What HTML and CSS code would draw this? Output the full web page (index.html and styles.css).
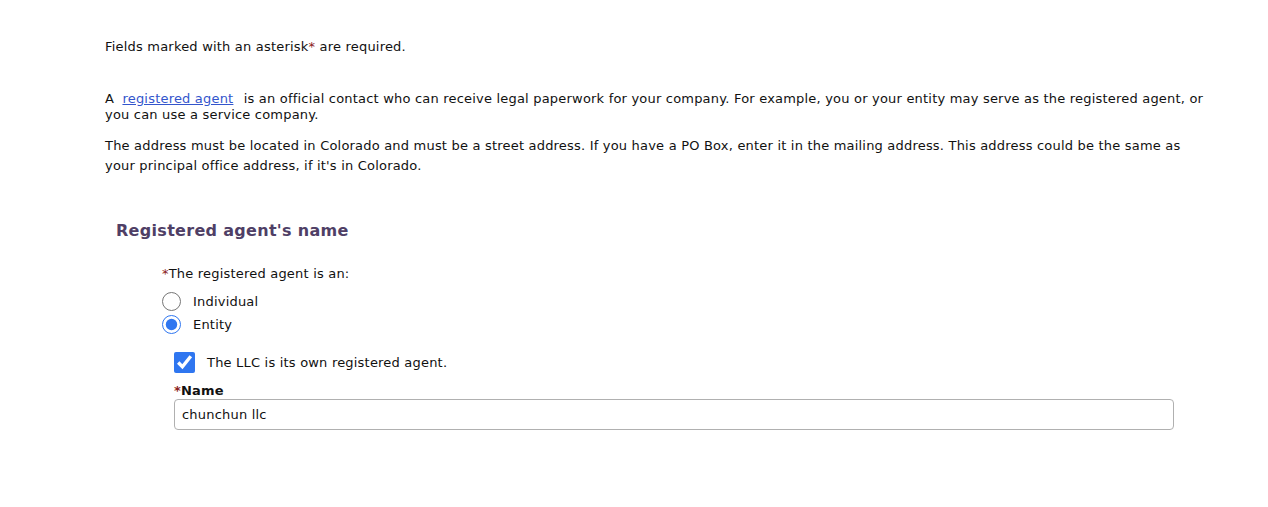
FILE: index.html
```html
<!DOCTYPE html>
<html lang="en">
<head>
    <meta charset="UTF-8">
    <title>Registered agent</title>
    <link rel="stylesheet" href="styles.css">
</head>
<body>
    <main class="page">
        <p class="required-note">Fields marked with an asterisk<span class="req">*</span> are required.</p>

        <p class="intro">A <a href="#">registered agent</a> is an official contact who can receive legal paperwork for your company. For example, you or your entity may serve as the registered agent, or you can use a service company.</p>
        <p class="intro address">The address must be located in Colorado and must be a street address. If you have a PO Box, enter it in the mailing address. This address could be the same as your principal office address, if it's in Colorado.</p>

        <section class="agent-section">
            <h2>Registered agent's name</h2>

            <div class="agent-type">
                <div class="question"><span class="req">*</span>The registered agent is an:</div>
                <label class="radio-row">
                    <input type="radio" name="agentType">
                    <span>Individual</span>
                </label>
                <label class="radio-row">
                    <input type="radio" name="agentType" checked>
                    <span>Entity</span>
                </label>
            </div>

            <div class="entity-fields">
                <label class="check-row">
                    <input type="checkbox" checked>
                    <span>The LLC is its own registered agent.</span>
                </label>
                <label class="field-label" for="agentName"><span class="req">*</span>Name</label>
                <input type="text" id="agentName" class="text-input" value="chunchun llc">
            </div>
        </section>
    </main>
</body>
</html>
```

FILE: styles.css
```css
* {
    box-sizing: border-box;
}

body {
    margin: 0;
    background-color: #fff;
    color: #111;
    font-family: "DejaVu Sans", Verdana, sans-serif;
    font-size: 13px;
    letter-spacing: 0.2px;
    line-height: 16px;
}

.page {
    padding: 39px 60px 0 105px;
}

p {
    margin: 0;
}

.req {
    color: #8b2020;
}

.required-note {
    margin-bottom: 36px;
}

.intro {
    margin-bottom: 13px;
}

.intro.address {
    line-height: 20px;
}

.intro a {
    color: #3355cc;
    margin: 0 6px 0 4px;
}

/* Agent section */
.agent-section {
    padding: 32px 0 0 11px;
}

.agent-section h2 {
    margin: 0 0 25px;
    font-size: 16px;
    line-height: 20px;
    letter-spacing: 0.3px;
    color: #4f3f66;
}

.agent-type {
    padding-left: 46px;
}

.question {
    margin-bottom: 8px;
}

.radio-row {
    display: flex;
    align-items: center;
    gap: 12px;
    height: 23px;
}

.radio-row input {
    width: 19px;
    height: 19px;
    margin: 0;
    accent-color: #2f76f0;
}

.entity-fields {
    padding: 16px 0 0 58px;
}

.check-row {
    display: flex;
    align-items: center;
    gap: 12px;
    margin-bottom: 10px;
}

.check-row input {
    width: 21px;
    height: 21px;
    margin: 0;
    accent-color: #2f76f0;
}

.field-label {
    display: block;
    font-weight: bold;
}

.text-input {
    display: block;
    width: 1000px;
    height: 31px;
    padding: 0 7px;
    border: 1px solid #b0b0b0;
    border-radius: 4px;
    font-family: "DejaVu Sans", Verdana, sans-serif;
    font-size: 13px;
    letter-spacing: 0.2px;
    color: #111;
}
```
